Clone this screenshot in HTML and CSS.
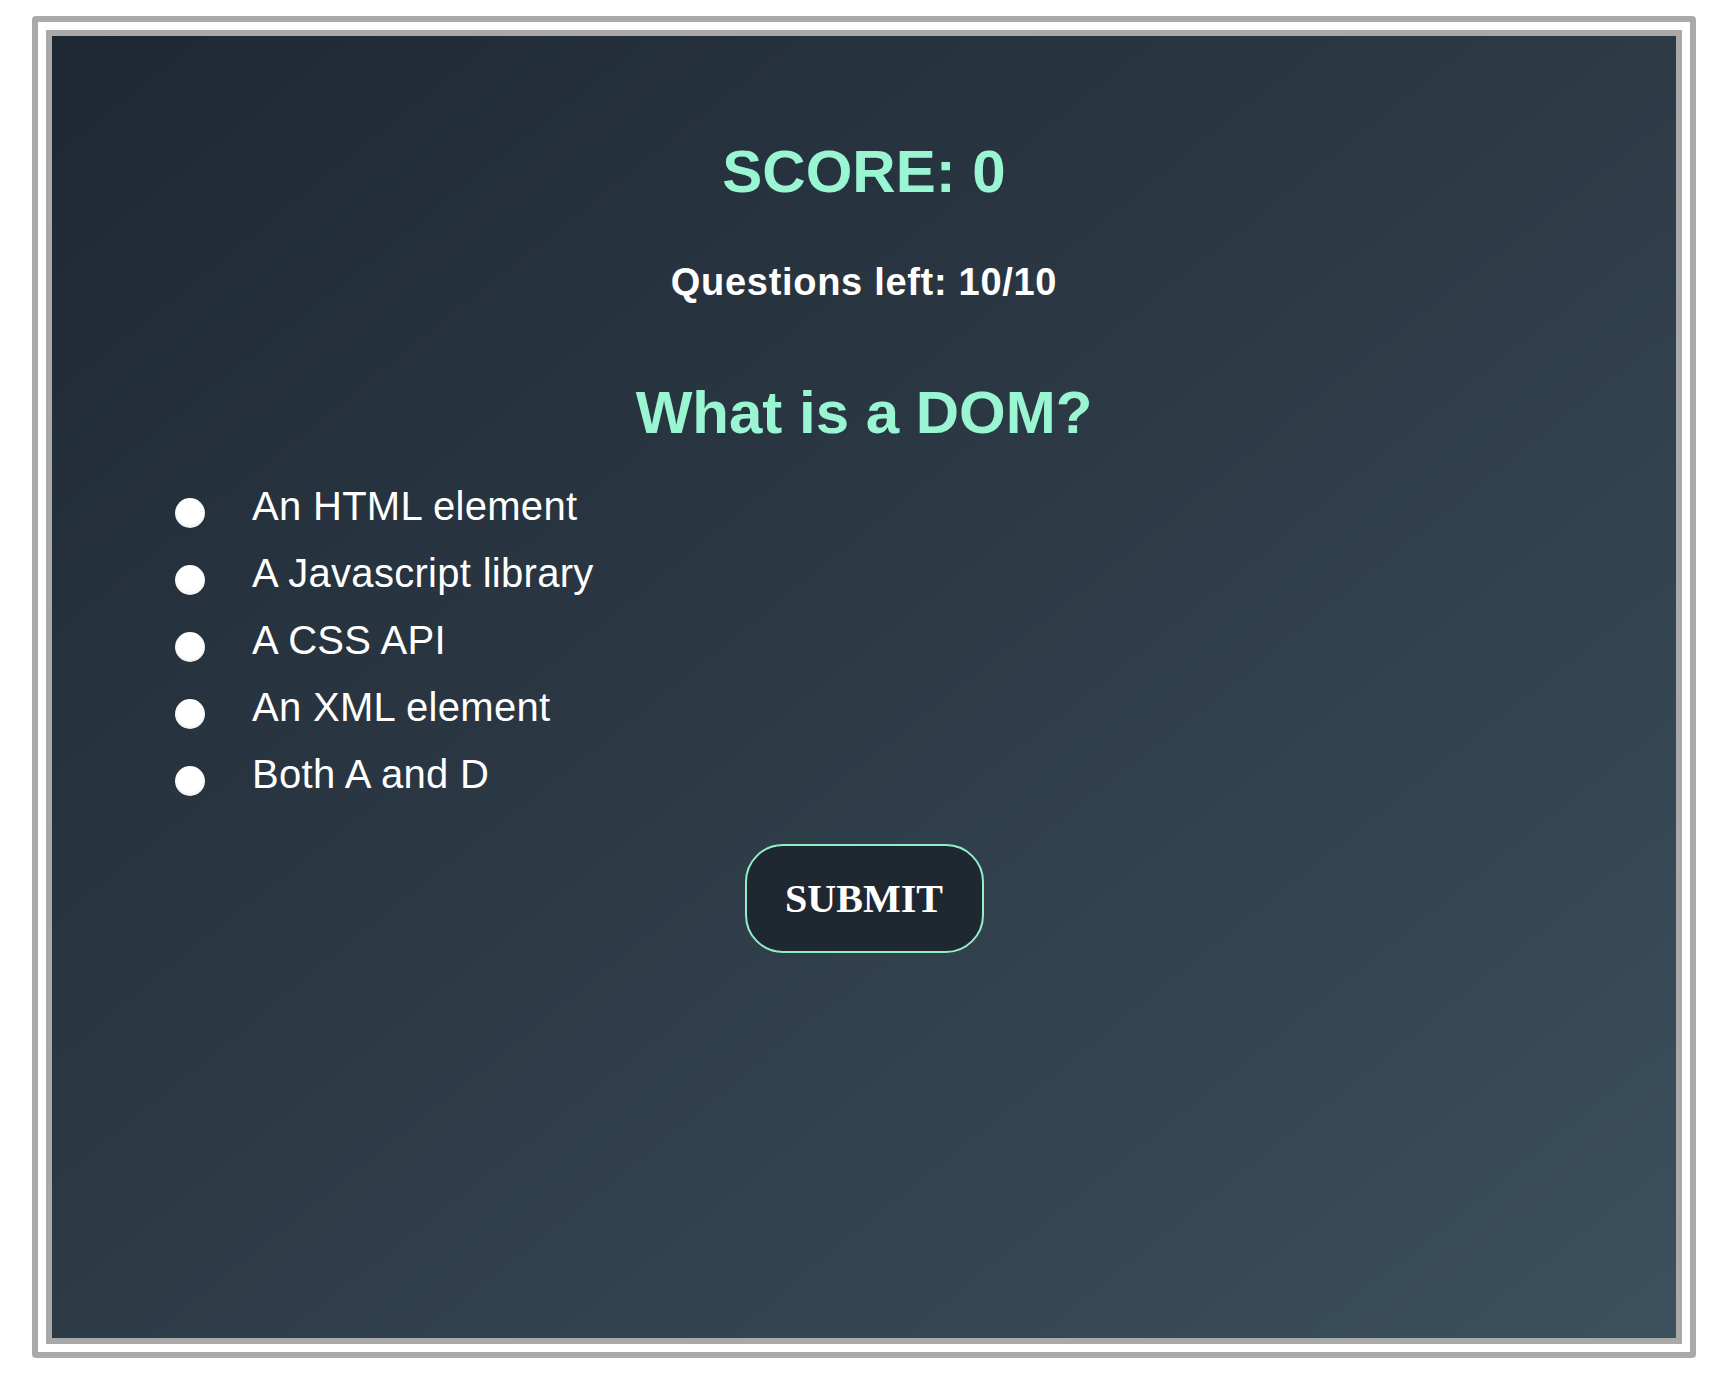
FILE: index.html
```html
<!DOCTYPE html>
<html lang="en">
<head>
<meta charset="utf-8">
<title>Quiz</title>
<link rel="stylesheet" href="styles.css">
</head>
<body>
<div class="frame">
  <main class="panel">
    <h1 class="score">SCORE: 0</h1>
    <p class="left">Questions left: 10/10</p>
    <h2 class="question">What is a DOM?</h2>
    <ul class="options">
      <li><label class="option"><input type="radio" name="answer" class="radio"><span>An HTML element</span></label></li>
      <li><label class="option"><input type="radio" name="answer" class="radio"><span>A Javascript library</span></label></li>
      <li><label class="option"><input type="radio" name="answer" class="radio"><span>A CSS API</span></label></li>
      <li><label class="option"><input type="radio" name="answer" class="radio"><span>An XML element</span></label></li>
      <li><label class="option"><input type="radio" name="answer" class="radio"><span>Both A and D</span></label></li>
    </ul>
    <button class="submit" type="button">SUBMIT</button>
  </main>
</div>
</body>
</html>
```
FILE: styles.css
```css
html, body {
  margin: 0;
  padding: 0;
  background: #ffffff;
}

.frame {
  margin: 16px 28px 24px 32px;
  border: 6px solid #a9a9a9;
  border-radius: 4px;
  padding: 8px;
  background: #ffffff;
}

.panel {
  display: block;
  height: 1201px;
  padding-top: 101px;
  border: 6px solid #a9a9a9;
  background: linear-gradient(to bottom right, #1e2832 0%, #2d3b47 50%, #3c505d 100%);
  font-family: "Liberation Sans", Arial, Helvetica, sans-serif;
}

.score {
  margin: 0;
  font-size: 60px;
  line-height: 70px;
  font-weight: bold;
  color: #9af5d2;
  text-align: center;
}

.left {
  margin: 53px 0 0 0;
  font-size: 38px;
  line-height: 44px;
  font-weight: bold;
  letter-spacing: 0.7px;
  color: #ffffff;
  text-align: center;
}

.question {
  margin: 74px 0 0 0;
  font-size: 60px;
  line-height: 70px;
  font-weight: bold;
  color: #9af5d2;
  text-align: center;
}

.options {
  list-style: none;
  margin: 25px 0 0 0;
  padding: 0 0 0 123px;
}

.option {
  display: flex;
  align-items: flex-start;
  gap: 47px;
  font-size: 40px;
  line-height: 67px;
  letter-spacing: 0.3px;
  color: #ffffff;
  cursor: pointer;
}

.radio {
  -webkit-appearance: none;
  appearance: none;
  flex-shrink: 0;
  width: 30px;
  height: 30px;
  margin: 25px 0 0 0;
  border-radius: 50%;
  background: radial-gradient(circle at 50% 45%, #ffffff 0%, #ffffff 55%, #eeeeee 75%, #bdbdbd 100%);
  box-shadow: 0 0 1px rgba(0, 0, 0, 0.5);
}

.submit {
  display: block;
  margin: 36px auto 0 auto;
  width: 239px;
  height: 109px;
  box-sizing: border-box;
  border: 2px solid #8fefc9;
  border-radius: 38px;
  background: #1f2731;
  color: #ffffff;
  font-family: "Liberation Serif", "Times New Roman", serif;
  font-weight: bold;
  font-size: 40px;
  padding: 0;
  cursor: pointer;
}
```
